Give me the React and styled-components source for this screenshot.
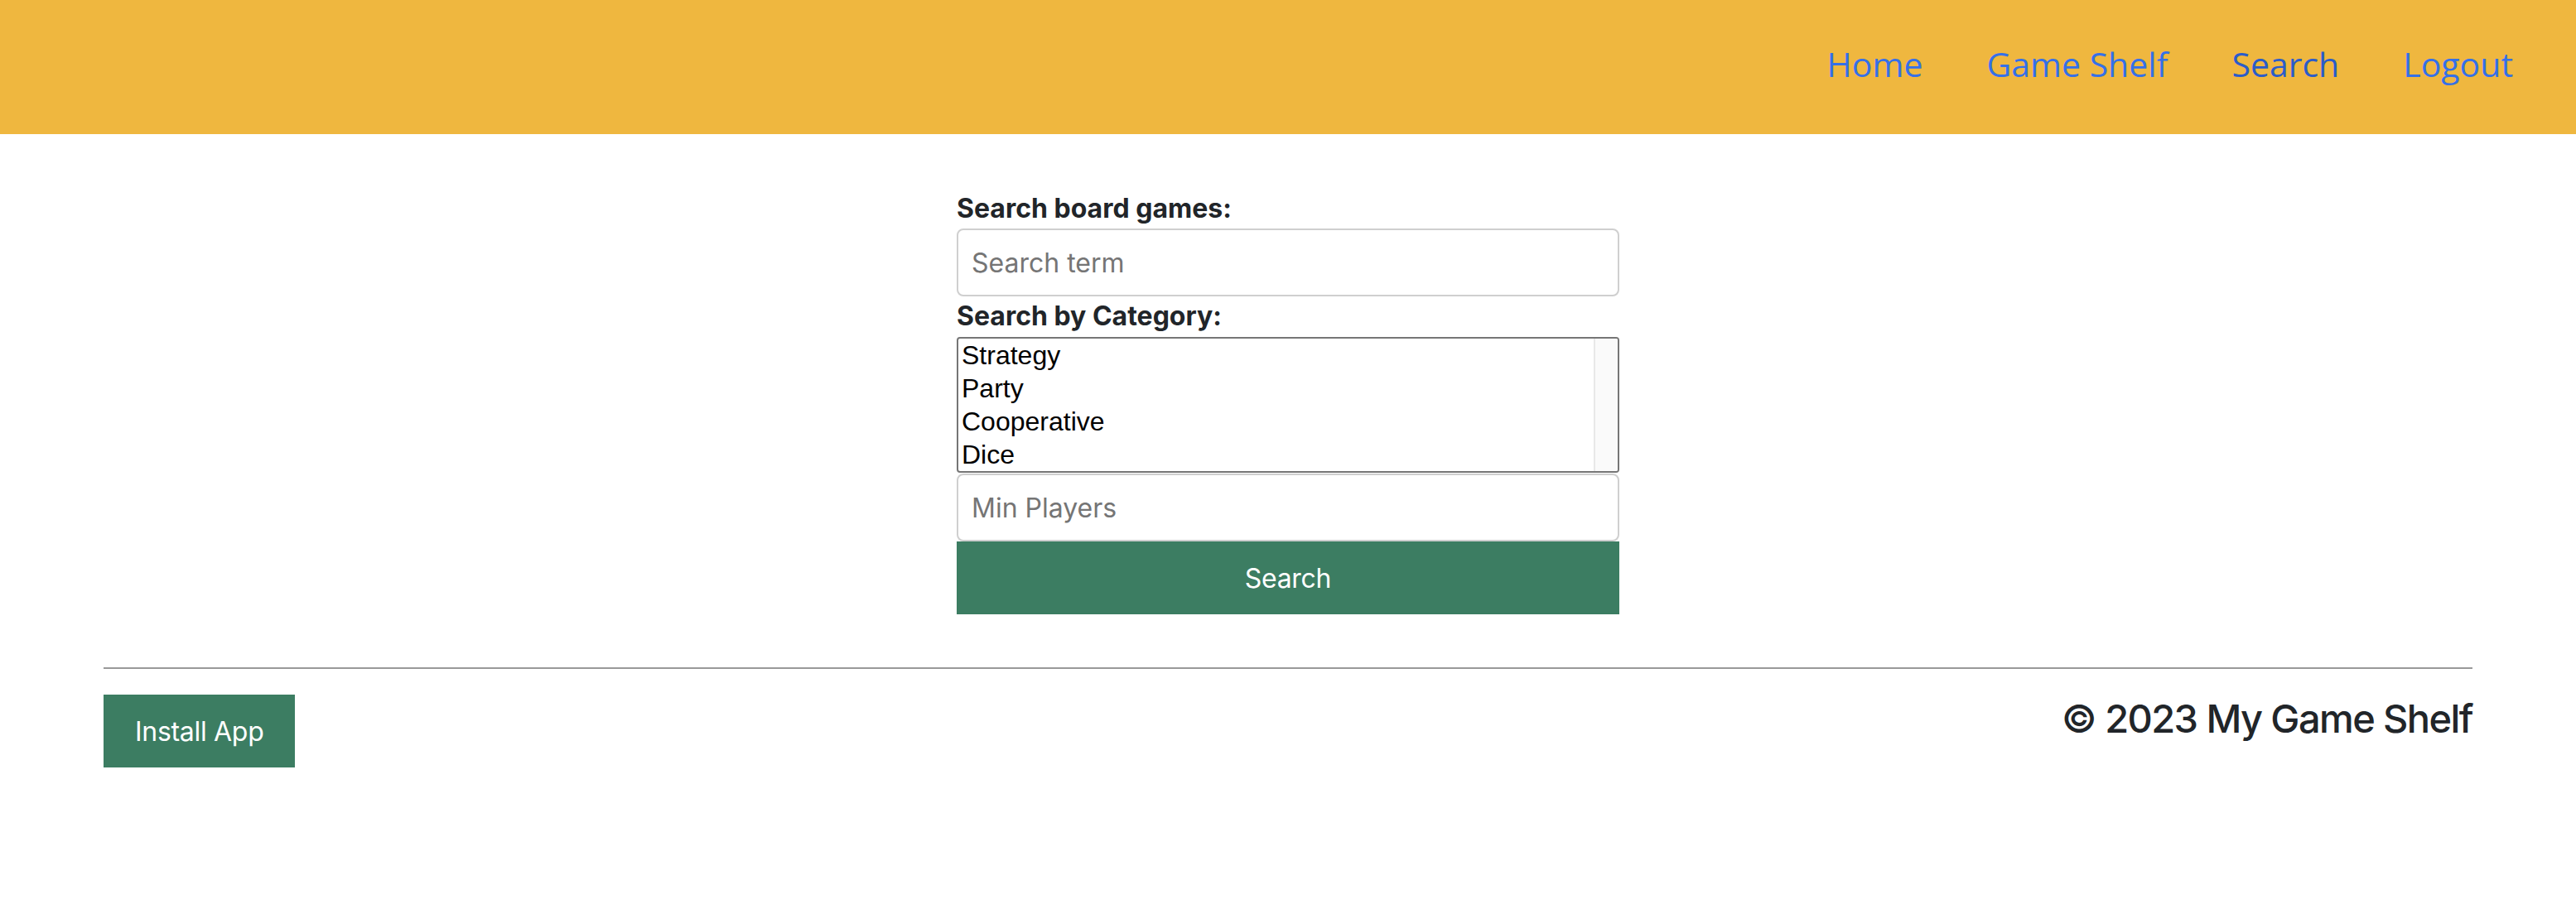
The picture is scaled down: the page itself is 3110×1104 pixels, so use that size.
import React from "react";
import styled, { createGlobalStyle } from "styled-components";

const GlobalStyle = createGlobalStyle`
  * { box-sizing: border-box; }
  html, body { margin: 0; padding: 0; background: #ffffff; }
  body {
    font-family: Inter, "Liberation Sans", Arial, sans-serif;
    color: #212529;
  }
`;

const Header = styled.header`
  height: 162px;
  background: #efb73f;
  display: flex;
  justify-content: flex-end;
  align-items: center;
  padding: 0 76px 9px 0;
`;

const NavLink = styled.a`
  font-family: "Open Sans", "Noto Sans", sans-serif;
  font-size: 41px;
  color: ${(p) => (p.$active ? "#2b5cc9" : "#3570e8")};
  text-decoration: none;
  margin-left: ${(p) => (p.$first ? "0" : "77px")};
  cursor: pointer;
`;

const Main = styled.main`
  padding-top: 66px;
  display: flex;
  justify-content: center;
`;

const Form = styled.form`
  width: 800px;
  display: flex;
  flex-direction: column;
`;

const Label = styled.label`
  display: block;
  font-size: 32px;
  font-weight: 700;
  line-height: 48px;
  color: #212529;
`;

const TextInput = styled.input`
  display: block;
  width: 100%;
  height: 82px;
  margin: ${(p) => p.$margin || "0"};
  padding: 0 16px;
  border: 2px solid #cfcfcf;
  border-radius: 8px;
  font-family: Inter, "Liberation Sans", sans-serif;
  font-size: 32px;
  color: #212529;
  background: #fff;
  outline: none;
  &::placeholder { color: #757575; }
`;

const Listbox = styled.div`
  display: flex;
  height: 164px;
  margin-top: 1px;
  border: 2px solid #767676;
  border-radius: 4px;
  overflow: hidden;
  background: #fff;
`;

const OptionList = styled.div`
  flex: 1;
  display: flex;
  flex-direction: column;
`;

const Option = styled.div`
  height: 40px;
  line-height: 40px;
  padding-left: 4px;
  font-family: "Liberation Sans", Arial, sans-serif;
  font-size: 32px;
  color: #000;
`;

const ScrollTrack = styled.div`
  width: 29px;
  background: #fafafa;
  border-left: 2px solid #e8e8e8;
`;

const PrimaryButton = styled.button`
  display: block;
  height: 88px;
  width: ${(p) => p.$width || "auto"};
  padding: 0 ${(p) => p.$padX || "40px"};
  border: none;
  border-radius: 0;
  background: #3c7d62;
  color: #ffffff;
  font-family: Inter, "Liberation Sans", sans-serif;
  font-size: 32px;
  letter-spacing: -0.3px;
  cursor: pointer;
`;

const Footer = styled.footer`
  padding: 64px 125px 0;
`;

const Rule = styled.hr`
  margin: 0;
  border: none;
  height: 2px;
  background: #999999;
`;

const FooterRow = styled.div`
  display: flex;
  justify-content: space-between;
  align-items: flex-start;
  margin-top: 31px;
`;

const Copyright = styled.h4`
  margin: 0;
  font-size: 47px;
  font-weight: 500;
  letter-spacing: -1.6px;
  line-height: 57.6px;
  color: #212529;
`;

export default function App() {
  return (
    <>
      <GlobalStyle />
      <Header>
        <NavLink $first>Home</NavLink>
        <NavLink>Game Shelf</NavLink>
        <NavLink $active>Search</NavLink>
        <NavLink>Logout</NavLink>
      </Header>
      <Main>
        <Form onSubmit={(e) => e.preventDefault()}>
          <Label>Search board games:</Label>
          <TextInput placeholder="Search term" />
          <Label>Search by Category:</Label>
          <Listbox>
            <OptionList>
              <Option>Strategy</Option>
              <Option>Party</Option>
              <Option>Cooperative</Option>
              <Option>Dice</Option>
            </OptionList>
            <ScrollTrack />
          </Listbox>
          <TextInput placeholder="Min Players" $margin="1px 0 0" />
          <PrimaryButton $width="100%" type="submit">Search</PrimaryButton>
        </Form>
      </Main>
      <Footer>
        <Rule />
        <FooterRow>
          <PrimaryButton type="button" $padX="38px">Install App</PrimaryButton>
          <Copyright>© 2023 My Game Shelf</Copyright>
        </FooterRow>
      </Footer>
    </>
  );
}
